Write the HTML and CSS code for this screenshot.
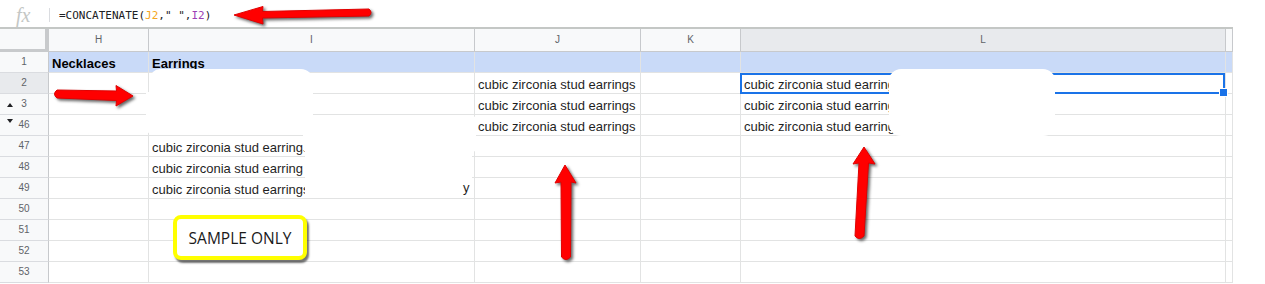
FILE: index.html
```html
<!DOCTYPE html>
<html lang="en">
<head>
    <meta charset="UTF-8">
    <title>Sheet</title>
    <link rel="stylesheet" href="styles.css">
</head>
<body>
    <div class="page">
        <!-- Formula bar -->
        <div class="formula-bar">
            <span class="fx">fx</span>
            <span class="fx-sep"></span>
            <span class="formula">=CONCATENATE(<span class="ref-j">J2</span>," ",<span class="ref-i">I2</span>)</span>
        </div>

        <!-- Grid -->
        <div class="sheet">
            <div class="corner"></div>
            <div class="head">H</div>
            <div class="head">I</div>
            <div class="head">J</div>
            <div class="head">K</div>
            <div class="head selected">L</div>
            <div class="head"></div>

            <div class="row-num">1</div>
            <div class="cell band bold">Necklaces</div>
            <div class="cell band bold">Earrings</div>
            <div class="cell band"></div>
            <div class="cell band"></div>
            <div class="cell band"></div>
            <div class="cell band"></div>

            <div class="row-num selected">2</div>
            <div class="cell"></div>
            <div class="cell"></div>
            <div class="cell">cubic zirconia stud earrings</div>
            <div class="cell"></div>
            <div class="cell active">cubic zirconia stud earrings</div>
            <div class="cell"></div>

            <div class="row-num"><span class="tri-up"></span>3</div>
            <div class="cell"></div>
            <div class="cell"></div>
            <div class="cell">cubic zirconia stud earrings</div>
            <div class="cell"></div>
            <div class="cell">cubic zirconia stud earrings</div>
            <div class="cell"></div>

            <div class="row-num"><span class="tri-down"></span>46</div>
            <div class="cell"></div>
            <div class="cell"></div>
            <div class="cell">cubic zirconia stud earrings</div>
            <div class="cell"></div>
            <div class="cell">cubic zirconia stud earrings</div>
            <div class="cell"></div>

            <div class="row-num">47</div>
            <div class="cell"></div>
            <div class="cell">cubic zirconia stud earrings</div>
            <div class="cell"></div>
            <div class="cell"></div>
            <div class="cell"></div>
            <div class="cell"></div>

            <div class="row-num">48</div>
            <div class="cell"></div>
            <div class="cell">cubic zirconia stud earring</div>
            <div class="cell"></div>
            <div class="cell"></div>
            <div class="cell"></div>
            <div class="cell"></div>

            <div class="row-num">49</div>
            <div class="cell"></div>
            <div class="cell">cubic zirconia stud earrings</div>
            <div class="cell"></div>
            <div class="cell"></div>
            <div class="cell"></div>
            <div class="cell"></div>

            <div class="row-num">50</div>
            <div class="cell"></div><div class="cell"></div><div class="cell"></div><div class="cell"></div><div class="cell"></div><div class="cell"></div>
            <div class="row-num">51</div>
            <div class="cell"></div><div class="cell"></div><div class="cell"></div><div class="cell"></div><div class="cell"></div><div class="cell"></div>
            <div class="row-num">52</div>
            <div class="cell"></div><div class="cell"></div><div class="cell"></div><div class="cell"></div><div class="cell"></div><div class="cell"></div>
            <div class="row-num">53</div>
            <div class="cell"></div><div class="cell"></div><div class="cell"></div><div class="cell"></div><div class="cell"></div><div class="cell"></div>
        </div>

        <!-- redacted bits pasted over the sheet -->
        <div class="redact redact-i-top"></div>
        <div class="redact redact-i-mid"></div>
        <div class="redact redact-i-right"></div>
        <div class="redact redact-i-low"></div>
        <div class="redact redact-l"></div>
        <span class="stray stray-y">y</span>

        <div class="sample-note">SAMPLE ONLY</div>

        <!-- annotation arrows -->
        <svg class="arrows" width="1265" height="284" viewBox="0 0 1265 284">
            <path class="arrow" d="M234 15 L263 6.5 L262.5 11.5 L369 9 Q373 12.5 369 16 L262.5 18 L263 24 Z"/>
            <path class="arrow" d="M133 96 L116 85.5 L116.5 91 L57 90 Q52 94 57 98 L116.5 100.5 L116 106 Z"/>
            <path class="arrow" d="M565 165 L576 183 L571 182 L570.5 257 Q566 262 561.5 257 L561 182 L555 183 Z"/>
            <path class="arrow" d="M864 147 L875 164 L868.5 163 L864 236 Q859 241 855 236 L859 163 L853 164 Z"/>
        </svg>
    </div>
</body>
</html>
```

FILE: styles.css
```css
* {
    box-sizing: border-box;
}
body {
    margin: 0;
    background: #fff;
    font-family: "Liberation Sans", Arial, sans-serif;
}
.page {
    position: relative;
    width: 1265px;
    height: 284px;
    overflow: hidden;
}

/* formula bar */
.formula-bar {
    display: flex;
    align-items: center;
    height: 27px;
    width: 1233px;
    padding-top: 3px;
}
.fx {
    width: 49px;
    padding-left: 16px;
    font-family: "Liberation Serif", serif;
    font-style: italic;
    font-size: 20px;
    line-height: 20px;
    color: #c4c7c5;
}
.fx-sep {
    width: 1px;
    height: 14px;
    background: #dadce0;
}
.formula {
    margin-left: 9px;
    font-family: "DejaVu Sans Mono", monospace;
    font-size: 11px;
    color: #202124;
}
.ref-j {
    color: #f5a623;
}
.ref-i {
    color: #9c3fb5;
}

/* grid */
.sheet {
    width: 1233px;
    border-top: 2px solid #c4c7c5;
    display: grid;
    grid-template-columns: 49px 100px 326px 166px 100px 485px 7px;
    grid-template-rows: 23px repeat(11, 21px);
}
.corner {
    background: #f8f9fa;
    box-shadow: inset -4px -3px 0 #c8cacc;
}
.head {
    background: #f8f9fa;
    border-right: 1px solid #c7c9cc;
    border-bottom: 1px solid #c7c9cc;
    font-size: 10px;
    line-height: 22px;
    color: #5f6368;
    text-align: center;
}
.head.selected {
    background: #e8eaed;
}
.row-num {
    position: relative;
    background: #f8f9fa;
    border-right: 1px solid #c7c9cc;
    border-bottom: 1px solid #dadce0;
    font-size: 10px;
    line-height: 20px;
    color: #5f6368;
    text-align: center;
}
.row-num.selected {
    background: #e8eaed;
}
.tri-up, .tri-down {
    position: absolute;
    left: 7px;
    width: 0;
    height: 0;
    border-left: 3px solid transparent;
    border-right: 3px solid transparent;
}
.tri-up {
    top: 9px;
    border-bottom: 4px solid #202124;
}
.tri-down {
    top: 4px;
    border-top: 4px solid #202124;
}
.cell {
    border-right: 1px solid #e2e3e3;
    border-bottom: 1px solid #e2e3e3;
    padding: 3px 3px 0;
    font-size: 13px;
    line-height: 18px;
    color: #1f1f1f;
    white-space: nowrap;
    overflow: hidden;
}
.band {
    background: #c9daf8;
}
.bold {
    font-weight: bold;
    color: #000;
}
.cell.active {
    position: relative;
    overflow: visible;
}
.cell.active::after {
    content: "";
    position: absolute;
    left: -1px;
    top: 0;
    right: 0;
    bottom: -1px;
    border: 2px solid #1a73e8;
}
.cell.active::before {
    content: "";
    position: absolute;
    right: -3px;
    bottom: -4px;
    width: 7px;
    height: 7px;
    background: #1a73e8;
    border: 1px solid #fff;
    z-index: 1;
}

/* white patches over hidden text */
.redact {
    position: absolute;
    background: #fff;
}
.redact-i-top {
    left: 150px;
    top: 69px;
    width: 163px;
    height: 26px;
    border-radius: 10px 12px 0 0;
}
.redact-i-mid {
    left: 146px;
    top: 92px;
    width: 167px;
    height: 43px;
    border-radius: 0 0 6px 8px;
}
.redact-i-right {
    left: 303px;
    top: 116px;
    width: 173px;
    height: 36px;
    border-radius: 4px;
}
.redact-i-low {
    left: 305px;
    top: 137px;
    width: 167px;
    height: 61px;
    border-radius: 3px;
}
.redact-l {
    left: 889px;
    top: 69px;
    width: 166px;
    height: 67px;
    border-radius: 12px;
}
.stray {
    position: absolute;
    font-size: 13px;
    color: #1f1f1f;
}
.stray-y {
    left: 463px;
    top: 180px;
}

/* yellow note */
.sample-note {
    position: absolute;
    left: 173px;
    top: 215px;
    width: 134px;
    height: 45px;
    display: flex;
    align-items: center;
    justify-content: center;
    background: #fff;
    border: 4px solid #ffff00;
    border-radius: 8px;
    box-shadow: 2px 3px 2px rgba(0, 0, 0, 0.55);
    font-family: "Open Sans", sans-serif;
    font-size: 15.5px;
    color: #1a1a1a;
}

/* arrows */
.arrows {
    position: absolute;
    left: 0;
    top: 0;
    pointer-events: none;
}
.arrow {
    fill: #ff0000;
    stroke: #e00000;
    stroke-width: 1;
    stroke-linejoin: round;
    filter: drop-shadow(2px 2px 1.5px rgba(0, 0, 0, 0.6));
}
```
